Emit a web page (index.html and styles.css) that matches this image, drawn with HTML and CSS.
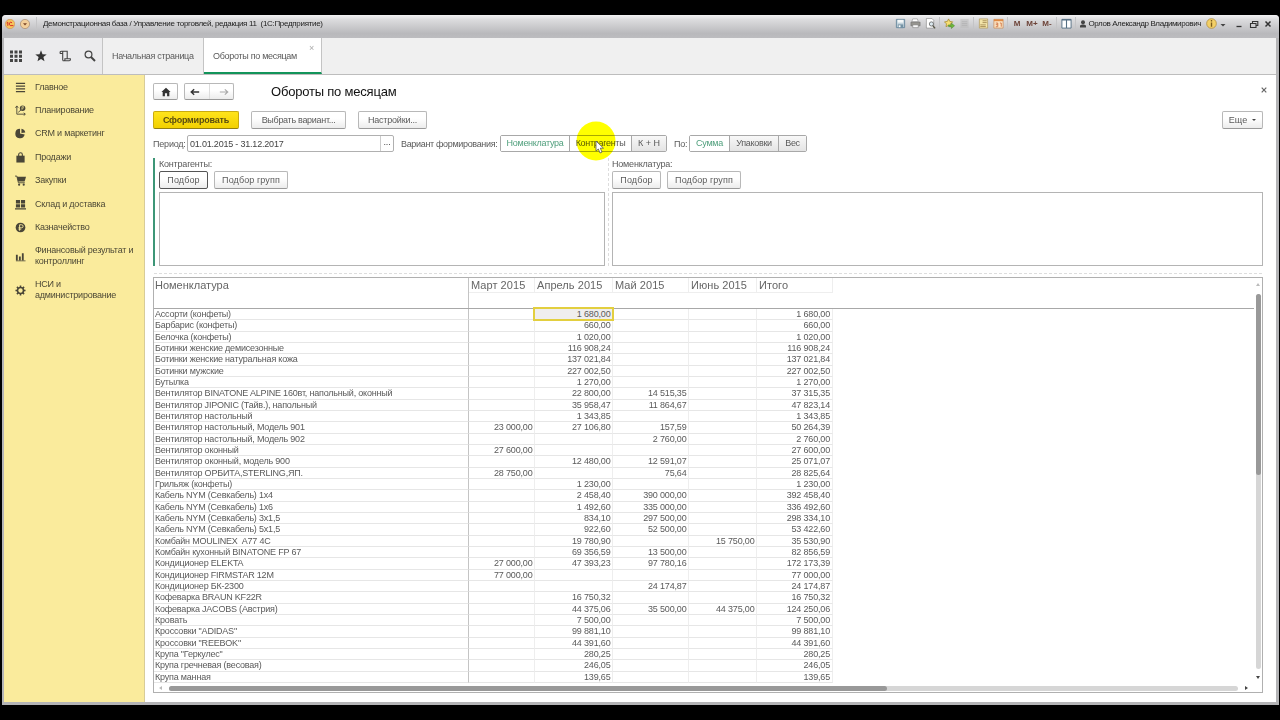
FILE: index.html
```html
<!DOCTYPE html>
<html lang="ru">
<head>
    <meta charset="UTF-8">
    <meta name="viewport" content="width=device-width, initial-scale=1.0">
    <title>Демонстрационная база / Управление торговлей</title>
    <link rel="stylesheet" href="styles.css">
</head>
<body>
    <div class="window">
        <!-- Title bar -->
        <div class="titlebar">
            <svg class="logo" viewBox="0 0 10 10"><circle cx="5" cy="5" r="4.7" fill="#f6c45c" stroke="#c98b55" stroke-width=".6"/><path d="M1.6 4l1.2-.8v3.6M7 3.8Q5.800 2.600 4.600 3.800T5.200 6.600H8.400" fill="none" stroke="#d8322a" stroke-width="1"/></svg>
            <svg class="logo" viewBox="0 0 10 10"><circle cx="5" cy="5" r="4.6" fill="#f3cf9b" stroke="#a98a70" stroke-width=".7"/><path d="M3 4.300h4L5 6.600z" fill="#7a4526"/></svg>
            <i class="sep"></i>
            <span class="app-title">Демонстрационная база / Управление торговлей, редакция 11&nbsp; (1С:Предприятие)</span>
            <div class="tools">
                <svg viewBox="0 0 12 12"><path d="M1.500 1.500h9v9h-9z" fill="#c3d3dc" stroke="#65859b"/><path d="M3 2h6v3H3z" fill="#f5f8f9"/><path d="M3 7h6v4H3z" fill="#7492a4"/><path d="M4 8h2v2H4z" fill="#fff"/></svg>
                <svg viewBox="0 0 12 12"><path d="M3 1h5l1 3H2z" fill="#fff" stroke="#888" stroke-width=".6"/><path d="M1 4.500h10v4H1z" fill="#96958f" stroke="#666" stroke-width=".6"/><path d="M3 7.500h6v3H3z" fill="#f8f8f8" stroke="#777" stroke-width=".6"/></svg>
                <svg viewBox="0 0 12 12"><path d="M1.500.500h6l2 2v8.500h-8z" fill="#fff" stroke="#888" stroke-width=".7"/><circle cx="7" cy="6.500" r="2.300" fill="#dce9ef" stroke="#555" stroke-width=".8"/><path d="M8.500 8.300l2.500 3" stroke="#554" stroke-width="1.500"/></svg>
                <i class="sep"></i>
                <svg viewBox="0 0 12 12"><path d="M5 1l1.400 2.800 3.100.4-2.200 2.200.5 3.100L5 8 2.200 9.500l.5-3.100L.5 4.200l3.100-.4z" fill="#f6df72" stroke="#a5872a" stroke-width=".8"/><path d="M5 7.500h3V5.500l3.500 3L8 11.500v-2H5z" fill="#6cb83b" stroke="#3f7f23" stroke-width=".5"/></svg>
                <svg class="dim" viewBox="0 0 12 12"><path d="M1.500 1h9v10h-9z" fill="#bbb"/><path d="M3 4h6M3 6h6M3 8h6" stroke="#999"/></svg>
                <i class="sep"></i>
                <svg viewBox="0 0 12 12"><path d="M1.500 1h9v10h-9z" fill="#f3e4a8" stroke="#b29b62" stroke-width=".8"/><path d="M5 3h4.500M5 5h4.500M2.500 7.500h6M2.500 9.300h6" stroke="#967a45" stroke-width=".8"/></svg>
                <svg viewBox="0 0 12 12"><path d="M1 1.500h10V11H1z" fill="#fbe5c6" stroke="#c98a55" stroke-width=".8"/><path d="M1 1.500h10v2H1z" fill="#e08b45"/><path d="M3 5.500h2.200v4M3 7.300h2M3 9.500h2M7.500 5.500H9v4" fill="none" stroke="#cc6a38" stroke-width=".9"/></svg>
                <i class="sep"></i>
                <b>M</b><b>M+</b><b>M-</b>
                <i class="sep"></i>
                <svg class="cols" viewBox="0 0 12 12"><path d="M1 1.500h10v9.500H1z" fill="#fff" stroke="#546f83"/><path d="M1 2h10M6 2v9" stroke="#546f83" stroke-width="1.200"/></svg>
                <i class="sep"></i>
                <svg class="user" viewBox="0 0 8 8"><circle cx="4" cy="2.200" r="2" fill="#444"/><path d="M1 7.500V5.500l2-1h2l2 1v2z" fill="#444"/></svg>
                <span class="user-name">Орлов Александр Владимирович</span>
                <svg class="info" viewBox="0 0 12 12"><circle cx="6" cy="6" r="5.300" fill="#f3d067" stroke="#af8a38" stroke-width=".8"/><path d="M6 2.200v1.500M6 4.800V9.500" stroke="#7c5c1c" stroke-width="1.500"/></svg>
                <svg class="drop" viewBox="0 0 8 8"><path d="M1.500 4h5L4 6.500z" fill="#444"/></svg>
                <svg class="ctl" viewBox="0 0 10 10"><path d="M2.500 7.500h5" stroke="#333" stroke-width="1.300"/></svg>
                <svg class="ctl" viewBox="0 0 10 10"><path d="M3.500 4V2.500h5.300v4H7.500M1.500 4.500h5.500v4H1.500z" fill="none" stroke="#333" stroke-width="1.100"/></svg>
                <svg class="ctl" viewBox="0 0 10 10"><path d="M2.500 2.500l5 5M7.500 2.500l-5 5" stroke="#333" stroke-width="1.500"/></svg>
            </div>
        </div>

        <!-- Section and tab panel -->
        <div class="tabbar">
            <div class="quick">
                <svg viewBox="0 0 12 12"><path d="M0 .5h3v3H0zM4.500.5h3v3h-3zM9 .5h3v3H9zM0 4.700h3v3H0zM4.500 4.700h3v3h-3zM9 4.700h3v3H9zM0 9h3v3H0zM4.500 9h3v3h-3zM9 9h3v3H9z" fill="#444"/></svg>
                <svg viewBox="0 0 12 12"><path d="M6 .3l1.500 3.900 4.200.2-3.300 2.600 1.100 4.200L6 8.900l-3.500 2.300L3.600 7 .3 4.400l4.200-.2z" fill="#333"/></svg>
                <svg viewBox="0 0 12 12"><path d="M3.500 3.500H1.300Q.6 1.200 2.500 1.200h5.700V8.700M3.700 1.500v9M3.700 10.800h6.300q1.700 0 1.300-2.100H5.900q.3 2.100-1.200 2.100" fill="none" stroke="#444" stroke-width="1.100"/></svg>
                <svg viewBox="0 0 12 12"><circle cx="4.500" cy="4.500" r="3.400" fill="none" stroke="#444" stroke-width="1.200"/><path d="M7 7l4 4" stroke="#444" stroke-width="1.900"/></svg>
            </div>
            <div class="tab">Начальная страница</div>
            <div class="tab active">Обороты по месяцам<span class="tab-close">×</span></div>
        </div>

        <div class="main">
            <div class="sidebar">
                <div class="item"><svg viewBox="0 0 12 12"><path d="M1 1.500h10M1 4.500h10M1 7.500h10M1 10.500h10" stroke="#4a4637" stroke-width="1.200"/></svg><span>Главное</span></div>
                <div class="item"><svg viewBox="0 0 12 12"><path d="M2 1.500V10h9M.5 3L2 1l1.500 2M9.500 8.500L11.300 10l-1.800 1.500M3.500 8l3-2.500" fill="none" stroke="#4a4637" stroke-width="1"/><circle cx="8.300" cy="3.500" r="3" fill="#4a4637"/><path d="M7.700 5.500v-4h1.500v2H7" fill="none" stroke="#faeb9c" stroke-width=".6"/></svg><span>Планирование</span></div>
                <div class="item"><svg viewBox="0 0 12 12"><path d="M5.500 6V.8A5.200 5.200 0 1 0 10.600 7.200z" fill="#4a4637"/><path d="M7 .8A5 5 0 0 1 11.200 5L7 5.500z" fill="#4a4637"/></svg><span>CRM и маркетинг</span></div>
                <div class="item"><svg viewBox="0 0 12 12"><path d="M1.500 4h9v7.500h-9z" fill="#4a4637"/><path d="M4 4.500V2.800a2 2 0 0 1 4 0v1.700" fill="none" stroke="#4a4637" stroke-width="1.200"/></svg><span>Продажи</span></div>
                <div class="item"><svg viewBox="0 0 12 12"><path d="M2 2h10l-1.500 5H3.500z" fill="#4a4637"/><path d="M0 1.200h2l1.700 7.300h7" fill="none" stroke="#4a4637"/><circle cx="4.500" cy="10.500" r="1.200" fill="#4a4637"/><circle cx="9.500" cy="10.500" r="1.200" fill="#4a4637"/></svg><span>Закупки</span></div>
                <div class="item"><svg viewBox="0 0 12 12"><path d="M1 1h4.500v3.800H1zM6.500 1H11v3.800H6.500zM1 5.600h4.500v3.600H1zM6.500 5.600H11v3.600H6.500zM0 10h12v1.500H0z" fill="#4a4637"/></svg><span>Склад и доставка</span></div>
                <div class="item"><svg viewBox="0 0 12 12"><circle cx="6" cy="6" r="5.300" fill="#4a4637"/><path d="M5 9.500V3h2.200a1.600 1.600 0 0 1 0 3.300H3.800M3.800 7.800h3" fill="none" stroke="#faeb9c" stroke-width="1"/></svg><span>Казначейство</span></div>
                <div class="item two"><svg viewBox="0 0 12 12"><path d="M1 4h2v6H1zM4.300 6h2v4h-2zM7.500 2.500h2V10h-2zM1 10.300h10.500v1H1z" fill="#4a4637"/></svg><span>Финансовый результат и<br>контроллинг</span></div>
                <div class="item two"><svg viewBox="0 0 12 12"><circle cx="6" cy="6" r="3.300" fill="none" stroke="#4a4637" stroke-width="1.800"/><path d="M6 .5v2M6 9.500v2M.5 6h2M9.500 6h2M2.100 2.100l1.400 1.400M8.500 8.500l1.400 1.400M2.100 9.900l1.400-1.400M8.500 3.500l1.400-1.400" stroke="#4a4637" stroke-width="1.700"/></svg><span>НСИ и<br>администрирование</span></div>
            </div>

            <div class="content">
                <div class="nav">
                    <div class="btn home"><svg viewBox="0 0 12 12"><path d="M6 1l5.500 5H10v5H7.300V7.500H4.700V11H2V6H.5z" fill="#333"/></svg></div>
                    <div class="btn history">
                        <svg viewBox="0 0 12 12"><path d="M11 6H2M5 2.800L1.500 6 5 9.200" fill="none" stroke="#333" stroke-width="1.700"/></svg>
                        <i></i>
                        <svg viewBox="0 0 12 12"><path d="M1 6h9M7 2.800L10.500 6 7 9.200" fill="none" stroke="#aaa" stroke-width="1.400"/></svg>
                    </div>
                    <h1>Обороты по месяцам</h1>
                    <svg class="close" viewBox="0 0 8 8"><path d="M1.700 1.700l4.600 4.600M6.300 1.700L1.700 6.300" stroke="#666" stroke-width="1.200"/></svg>
                </div>

                <div class="commands">
                    <div class="btn primary">Сформировать</div>
                    <div class="btn variant">Выбрать вариант...</div>
                    <div class="btn settings">Настройки...</div>
                    <div class="btn more">Еще<i class="caret"></i></div>
                </div>

                <div class="filters">
                    <label class="period">Период:</label>
                    <div class="input"><span>01.01.2015 - 31.12.2017</span><i>...</i></div>
                    <label class="mode">Вариант формирования:</label>
                    <div class="switch">
                        <span class="on w70">Номенклатура</span>
                        <span class="hover w61">Контрагенты
                            <svg class="pointer" viewBox="0 0 40 40"><circle cx="20" cy="20" r="19.500" fill="#ff0"/></svg>
                            <svg class="arrow" viewBox="0 0 10 14"><path d="M1 1v10l2.300-2 1.700 4 2-.9L5.300 8.200h3.200z" fill="#fff" stroke="#555" stroke-width=".8"/></svg>
                        </span>
                        <span class="w36">К + Н</span>
                    </div>
                    <label class="by">По:</label>
                    <div class="switch">
                        <span class="on w40">Сумма</span>
                        <span class="w49">Упаковки</span>
                        <span class="w29">Вес</span>
                    </div>
                </div>

                <div class="selection">
                    <div class="panel left">
                        <label>Контрагенты:</label>
                        <div class="row"><div class="btn pick focus">Подбор</div><div class="btn group">Подбор групп</div></div>
                        <div class="list"></div>
                    </div>
                    <div class="panel right">
                        <label>Номенклатура:</label>
                        <div class="row"><div class="btn pick">Подбор</div><div class="btn group">Подбор групп</div></div>
                        <div class="list"></div>
                    </div>
                </div>

                <div class="report">
                    <div class="sheet">
                        <div class="cols-grid head">
                            <span>Номенклатура</span><span>Март 2015</span><span>Апрель 2015</span><span>Май 2015</span><span>Июнь 2015</span><span>Итого</span>
                        </div>
                        <div class="cols-grid body">
                            <span>Ассорти (конфеты)</span><span></span><span class="selected">1 680,00</span><span></span><span></span><span>1 680,00</span>
                            <span>Барбарис (конфеты)</span><span></span><span>660,00</span><span></span><span></span><span>660,00</span>
                            <span>Белочка (конфеты)</span><span></span><span>1 020,00</span><span></span><span></span><span>1 020,00</span>
                            <span>Ботинки женские демисезонные</span><span></span><span>116 908,24</span><span></span><span></span><span>116 908,24</span>
                            <span>Ботинки женские натуральная кожа</span><span></span><span>137 021,84</span><span></span><span></span><span>137 021,84</span>
                            <span>Ботинки мужские</span><span></span><span>227 002,50</span><span></span><span></span><span>227 002,50</span>
                            <span>Бутылка</span><span></span><span>1 270,00</span><span></span><span></span><span>1 270,00</span>
                            <span>Вентилятор BINATONE ALPINE 160вт, напольный, оконный</span><span></span><span>22 800,00</span><span>14 515,35</span><span></span><span>37 315,35</span>
                            <span>Вентилятор JIPONIC (Тайв.), напольный</span><span></span><span>35 958,47</span><span>11 864,67</span><span></span><span>47 823,14</span>
                            <span>Вентилятор настольный</span><span></span><span>1 343,85</span><span></span><span></span><span>1 343,85</span>
                            <span>Вентилятор настольный, Модель 901</span><span>23 000,00</span><span>27 106,80</span><span>157,59</span><span></span><span>50 264,39</span>
                            <span>Вентилятор настольный, Модель 902</span><span></span><span></span><span>2 760,00</span><span></span><span>2 760,00</span>
                            <span>Вентилятор оконный</span><span>27 600,00</span><span></span><span></span><span></span><span>27 600,00</span>
                            <span>Вентилятор оконный, модель 900</span><span></span><span>12 480,00</span><span>12 591,07</span><span></span><span>25 071,07</span>
                            <span>Вентилятор ОРБИТА,STERLING,ЯП.</span><span>28 750,00</span><span></span><span>75,64</span><span></span><span>28 825,64</span>
                            <span>Грильяж (конфеты)</span><span></span><span>1 230,00</span><span></span><span></span><span>1 230,00</span>
                            <span>Кабель NYM (Севкабель) 1х4</span><span></span><span>2 458,40</span><span>390 000,00</span><span></span><span>392 458,40</span>
                            <span>Кабель NYM (Севкабель) 1х6</span><span></span><span>1 492,60</span><span>335 000,00</span><span></span><span>336 492,60</span>
                            <span>Кабель NYM (Севкабель) 3х1,5</span><span></span><span>834,10</span><span>297 500,00</span><span></span><span>298 334,10</span>
                            <span>Кабель NYM (Севкабель) 5х1,5</span><span></span><span>922,60</span><span>52 500,00</span><span></span><span>53 422,60</span>
                            <span>Комбайн MOULINEX&nbsp; A77 4C</span><span></span><span>19 780,90</span><span></span><span>15 750,00</span><span>35 530,90</span>
                            <span>Комбайн кухонный BINATONE FP 67</span><span></span><span>69 356,59</span><span>13 500,00</span><span></span><span>82 856,59</span>
                            <span>Кондиционер ELEKTA</span><span>27 000,00</span><span>47 393,23</span><span>97 780,16</span><span></span><span>172 173,39</span>
                            <span>Кондиционер FIRMSTAR 12M</span><span>77 000,00</span><span></span><span></span><span></span><span>77 000,00</span>
                            <span>Кондиционер БК-2300</span><span></span><span></span><span>24 174,87</span><span></span><span>24 174,87</span>
                            <span>Кофеварка BRAUN KF22R</span><span></span><span>16 750,32</span><span></span><span></span><span>16 750,32</span>
                            <span>Кофеварка JACOBS (Австрия)</span><span></span><span>44 375,06</span><span>35 500,00</span><span>44 375,00</span><span>124 250,06</span>
                            <span>Кровать</span><span></span><span>7 500,00</span><span></span><span></span><span>7 500,00</span>
                            <span>Кроссовки "ADIDAS"</span><span></span><span>99 881,10</span><span></span><span></span><span>99 881,10</span>
                            <span>Кроссовки "REEBOK"</span><span></span><span>44 391,60</span><span></span><span></span><span>44 391,60</span>
                            <span>Крупа "Геркулес"</span><span></span><span>280,25</span><span></span><span></span><span>280,25</span>
                            <span>Крупа гречневая (весовая)</span><span></span><span>246,05</span><span></span><span></span><span>246,05</span>
                            <span>Крупа манная</span><span></span><span>139,65</span><span></span><span></span><span>139,65</span>
                        </div>
                    </div>
                    <div class="vscroll"><i class="up"></i><div class="track"><div class="thumb"></div></div><i class="down"></i></div>
                    <div class="hscroll"><i class="prev"></i><div class="track"><div class="thumb"></div></div><i class="next"></i></div>
                </div>
            </div>
        </div>
    </div>
</body>
</html>
```

FILE: styles.css
```css
* {
    box-sizing: border-box;
}
body {
    margin: 0;
    height: 720px;
    padding: 15px 1px 15px 2px;
    background: #000;
    font-family: "Liberation Sans", Arial, sans-serif;
    font-size: 9px;
    letter-spacing: -0.2px;
    color: #5a5a5a;
    overflow: hidden;
    white-space: nowrap;
}
svg {
    display: block;
    flex: none;
}
.window {
    height: 690px;
    display: flex;
    flex-direction: column;
    background: #b4b4b6;
    border-radius: 4px 4px 0 0;
    padding: 0 3px 3px 2px;
}

/* title bar */
.titlebar {
    height: 23px;
    flex: none;
    margin: 0 -3px 0 -2px;
    padding: 0 6px 6px 3px;
    display: flex;
    align-items: center;
    background: linear-gradient(#f2f2f3, #dcdcde 20%, #b9b9bc 80%, #bcbcbf);
    border-radius: 4px 4px 0 0;
    color: #222;
}
.logo {
    width: 10px;
    height: 10px;
    margin-right: 5px;
}
.sep {
    width: 1px;
    height: 13px;
    background: #c4c4c6;
}
.titlebar > .sep {
    margin: 0 6px 0 1px;
}
.app-title {
    font-size: 8px;
    letter-spacing: -0.31px;
}
.tools {
    margin-left: auto;
    display: flex;
    align-items: center;
}
.tools svg {
    width: 11px;
    height: 11px;
    margin: 0 2px;
}
.tools .sep {
    margin: 0 1.500px;
}
.tools b {
    width: 15px;
    text-align: center;
    font-size: 8px;
    letter-spacing: 0;
    color: #6d4338;
}
.tools .dim {
    opacity: .5;
}
.tools .cols {
    margin: 0 2px;
}
.tools .user {
    width: 8px;
    height: 8px;
    margin: 0 2px 0 1px;
}
.user-name {
    width: 112px;
    font-size: 8px;
    letter-spacing: -0.4px;
}
.tools .info {
    margin: 0 2px 0 5px;
}
.tools .drop {
    width: 8px;
    height: 8px;
    margin: 0 3px 0 0;
}
.tools .ctl {
    width: 10px;
    height: 10px;
    margin: 0 0 0 4.500px;
}

/* tabs */
.tabbar {
    height: 37px;
    flex: none;
    display: flex;
    background: #f0f0f0;
    border-bottom: 1px solid #bdbdbd;
}
.quick {
    width: 99px;
    display: flex;
    align-items: center;
    gap: 12.700px;
    padding-left: 6px;
    background: #ebebed;
    border-right: 1px solid #c4c4c4;
}
.quick svg {
    width: 12px;
    height: 12px;
}
.tab {
    position: relative;
    width: 101px;
    padding-left: 9px;
    line-height: 37px;
    letter-spacing: -0.3px;
    border-right: 1px solid #c4c4c4;
}
.tab.active {
    width: 118px;
    background: #fff;
    border-bottom: 2px solid #12945a;
}
.tab-close {
    position: absolute;
    right: 7px;
    top: 5px;
    line-height: 10px;
    color: #aaa;
}

/* sections */
.main {
    flex: 1;
    display: flex;
    min-height: 0;
}
.sidebar {
    width: 141px;
    flex: none;
    padding-top: 0.500px;
    background: #faeb9c;
    border-right: 1px solid #d8cc98;
    color: #4d4936;
}
.item {
    height: 23.400px;
    display: flex;
    align-items: center;
    padding-left: 10.500px;
    letter-spacing: -0.22px;
    line-height: 11px;
}
.item svg {
    width: 11px;
    height: 11px;
    margin-right: 9.500px;
}
.item.two {
    height: 34px;
}

/* form */
.content {
    flex: 1;
    display: flex;
    flex-direction: column;
    padding: 8px 13px 9px 8px;
    background: #fff;
}
.btn {
    height: 18px;
    display: flex;
    align-items: center;
    justify-content: center;
    background: linear-gradient(#fff 40%, #ececec);
    border: 1px solid #b8b8b8;
    border-bottom-color: #999;
    border-radius: 2px;
    letter-spacing: 0.1px;
}
.nav {
    height: 17px;
    display: flex;
    align-items: center;
}
.home {
    width: 25px;
    height: 17px;
    margin-right: 6px;
}
.nav .btn svg {
    width: 10px;
    height: 10px;
}
.history {
    width: 50px;
    height: 17px;
    justify-content: space-around;
}
.history i {
    width: 1px;
    height: 15px;
    background: #ddd;
}
h1 {
    margin: 0 auto 0 37px;
    font-size: 13px;
    font-weight: normal;
    color: #111;
}
.close {
    width: 8px;
    height: 8px;
    margin: 0 -5px 4px 0;
}
.commands {
    display: flex;
    margin-top: 11px;
}
.primary {
    width: 86px;
    margin-right: 12px;
    background: linear-gradient(#ffe41c, #f2d000);
    border-color: #c9ab10;
    border-bottom-color: #94800f;
    font-weight: bold;
    letter-spacing: -0.2px;
    color: #5b4d10;
}
.variant {
    width: 95px;
    margin-right: 12px;
    letter-spacing: -0.3px;
}
.settings {
    width: 69px;
    letter-spacing: -0.2px;
}
.more {
    width: 41px;
    margin-left: auto;
}
.caret {
    margin-left: 5px;
    border: 2px solid transparent;
    border-top-color: #444;
    border-bottom: 0;
}
.filters {
    height: 17px;
    margin-top: 6px;
    display: flex;
    align-items: center;
}
.period {
    width: 34px;
}
.input {
    width: 207px;
    height: 17px;
    display: flex;
    align-items: center;
    border: 1px solid #b0b0b0;
    border-radius: 2px;
    color: #444;
}
.input span {
    flex: 1;
    padding-left: 2px;
}
.input i {
    width: 13px;
    height: 15px;
    line-height: 13px;
    border-left: 1px solid #ccc;
    text-align: center;
    font-style: normal;
}
.mode {
    width: 106px;
    padding-left: 7px;
    letter-spacing: -0.33px;
}
.by {
    width: 22px;
    padding-left: 7px;
}
.switch {
    display: flex;
    height: 17px;
    border: 1px solid #a8a8a8;
    border-radius: 2px;
    letter-spacing: -0.3px;
}
.switch span {
    position: relative;
    line-height: 15px;
    text-align: center;
    background: linear-gradient(#f8f8f8, #e4e4e4);
    border-left: 1px solid #a8a8a8;
}
.switch span:first-child {
    border-left: 0;
}
.switch .on {
    background: #fff;
    color: #4f9f7c;
}
.switch .hover {
    background: #fff;
}
.w70 { width: 68px; }
.w61 { width: 62px; }
.w36 { width: 35px; letter-spacing: 0; }
.w40 { width: 39px; }
.w49 { width: 49px; }
.w29 { width: 28px; }
.pointer {
    position: absolute;
    left: 6px;
    top: -15px;
    width: 40px;
    height: 40px;
    mix-blend-mode: multiply;
    z-index: 1;
}
.arrow {
    position: absolute;
    left: 25px;
    top: 4px;
    width: 10px;
    height: 14px;
    z-index: 2;
}
.selection {
    display: flex;
    margin-top: 6px;
    height: 108px;
}
.panel {
    display: flex;
    flex-direction: column;
}
.panel label {
    height: 13px;
    line-height: 12px;
}
.panel.left {
    width: 456px;
    padding: 0 3px 0 4px;
    border-left: 2px solid #3d9677;
    border-right: 1px dashed #ddd;
}
.panel.right {
    flex: 1;
    padding-left: 3px;
}
.panel .row {
    display: flex;
    gap: 6px;
    margin-bottom: 3px;
}
.pick {
    width: 49px;
}
.group {
    width: 74px;
}
.focus {
    border-color: #555;
}
.list {
    flex: 1;
    border: 1px solid #b4b4b4;
}

/* report */
.report {
    position: relative;
    flex: 1;
    margin-top: 11px;
    border: 1px solid #b0b0b0;
    min-height: 0;
}
.report::before {
    content: "";
    position: absolute;
    left: 0;
    right: 0;
    top: -5px;
    border-top: 1px dashed #ddd;
}
.sheet {
    height: 406px;
    width: 1100px;
    overflow: hidden;
}
.cols-grid {
    display: grid;
    grid-template-columns: 315px 66px 78px 76px 68px 75.500px;
}
.head {
    height: 31px;
    border-bottom: 1px solid #a8a8a8;
    font-size: 11px;
    color: #666;
}
.head span {
    height: 15px;
    line-height: 15px;
    padding-left: 2px;
    letter-spacing: 0.05px;
    border-right: 1px solid #eee;
    border-bottom: 1px solid #eee;
}
.head span:first-child {
    height: 30px;
    padding-left: 1px;
    letter-spacing: 0;
    border-right-color: #c4c4c4;
    border-bottom: 0;
}
.body {
    grid-auto-rows: 11.340px;
}
.body span {
    line-height: 11.800px;
    padding-right: 1.500px;
    text-align: right;
    letter-spacing: -0.17px;
    border-right: 1px solid #eee;
    border-bottom: 1px solid #e6e6e6;
}
.body span:nth-child(6n+1) {
    padding-left: 1px;
    text-align: left;
    letter-spacing: -0.2px;
    border-right-color: #c4c4c4;
}
.body .selected {
    position: relative;
    z-index: 1;
    margin: -1px 0 0 -1px;
    padding-top: 1px;
    background: #f0eeee;
    outline: 2px solid #e3cf3f;
    outline-offset: -1px;
}
.vscroll,
.hscroll {
    position: absolute;
    display: flex;
    align-items: center;
    justify-content: space-between;
}
.vscroll {
    right: 1px;
    top: 5px;
    bottom: 13px;
    width: 6px;
    flex-direction: column;
}
.hscroll {
    left: 5px;
    right: 14px;
    bottom: 1px;
    height: 6px;
}
.track {
    background: #d6d6d6;
    border-radius: 3px;
}
.thumb {
    background: #999;
    border-radius: 3px;
}
.vscroll .track {
    width: 5px;
    height: 375px;
}
.vscroll .thumb {
    height: 181px;
}
.hscroll .track {
    width: 1069px;
    height: 5px;
}
.hscroll .thumb {
    width: 718px;
    height: 5px;
}
.up, .down, .prev, .next {
    border: 2px solid transparent;
}
.up {
    border-top: 0;
    border-bottom: 3px solid #bbb;
}
.down {
    border-bottom: 0;
    border-top: 3px solid #444;
}
.prev {
    border-left: 0;
    border-right: 3px solid #bbb;
}
.next {
    border-right: 0;
    border-left: 3px solid #444;
}
```
